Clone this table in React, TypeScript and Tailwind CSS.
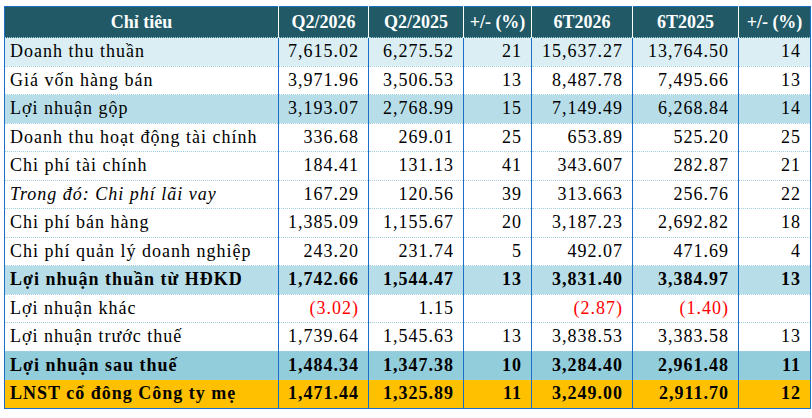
type Row = {
  label: string;
  values: string[];
  bg: string;
  bold?: boolean;
  italic?: boolean;
};

const rows: Row[] = [
  { label: "Doanh thu thuần", values: ["7,615.02", "6,275.52", "21", "15,637.27", "13,764.50", "14"], bg: "bg-[#daeef3]" },
  { label: "Giá vốn hàng bán", values: ["3,971.96", "3,506.53", "13", "8,487.78", "7,495.66", "13"], bg: "bg-white" },
  { label: "Lợi nhuận gộp", values: ["3,193.07", "2,768.99", "15", "7,149.49", "6,268.84", "14"], bg: "bg-[#b7dee8]" },
  { label: "Doanh thu hoạt động tài chính", values: ["336.68", "269.01", "25", "653.89", "525.20", "25"], bg: "bg-white" },
  { label: "Chi phí tài chính", values: ["184.41", "131.13", "41", "343.607", "282.87", "21"], bg: "bg-white" },
  { label: "Trong đó: Chi phí lãi vay", values: ["167.29", "120.56", "39", "313.663", "256.76", "22"], bg: "bg-white", italic: true },
  { label: "Chi phí bán hàng", values: ["1,385.09", "1,155.67", "20", "3,187.23", "2,692.82", "18"], bg: "bg-white" },
  { label: "Chi phí quản lý doanh nghiệp", values: ["243.20", "231.74", "5", "492.07", "471.69", "4"], bg: "bg-white" },
  { label: "Lợi nhuận thuần từ HĐKD", values: ["1,742.66", "1,544.47", "13", "3,831.40", "3,384.97", "13"], bg: "bg-[#b7dee8]", bold: true },
  { label: "Lợi nhuận khác", values: ["(3.02)", "1.15", "", "(2.87)", "(1.40)", ""], bg: "bg-white" },
  { label: "Lợi nhuận trước thuế", values: ["1,739.64", "1,545.63", "13", "3,838.53", "3,383.58", "13"], bg: "bg-white" },
  { label: "Lợi nhuận sau thuế", values: ["1,484.34", "1,347.38", "10", "3,284.40", "2,961.48", "11"], bg: "bg-[#92cddc]", bold: true },
  { label: "LNST cổ đông Công ty mẹ", values: ["1,471.44", "1,325.89", "11", "3,249.00", "2,911.70", "12"], bg: "bg-[#ffc000]", bold: true },
];

const headers = ["Q2/2026", "Q2/2025", "+/- (%)", "6T2026", "6T2025", "+/- (%)"];

export default function App() {
  return (
    <div className="w-[812px] h-[418px] bg-white pt-[6px] pl-[4px] font-['Liberation_Serif',serif] text-[18px] text-black">
      <table className="w-[806px] table-fixed border-collapse border border-[#1b6fc8]">
        <colgroup>
          <col className="w-[274px]" />
          <col className="w-[90px]" />
          <col className="w-[95px]" />
          <col className="w-[68px]" />
          <col className="w-[101px]" />
          <col className="w-[106px]" />
          <col className="w-[72px]" />
        </colgroup>
        <thead>
          <tr className="h-[31px] bg-[#215967] text-white font-bold">
            <th className="text-center font-bold border-r border-white">Chỉ tiêu</th>
            {headers.map((h, i) => (
              <th key={i} className="text-center font-bold border-r border-white last:border-r-0">
                {h}
              </th>
            ))}
          </tr>
        </thead>
        <tbody className="tracking-[1px]">
          {rows.map((r, i) => (
            <tr
              key={i}
              className={`h-[28.5px] ${r.bg} ${r.bold ? "font-bold" : ""} border-t border-dotted border-t-[#9fcfe0]`}
            >
              <td className={`pl-[5px] whitespace-nowrap border-r border-[#1b6fc8] ${r.italic ? "italic" : ""}`}>
                {r.label}
              </td>
              {r.values.map((v, j) => (
                <td
                  key={j}
                  className={`text-right pr-[9px] whitespace-nowrap border-r border-[#1b6fc8] ${
                    v.startsWith("(") ? "text-[#ff0000] font-normal" : ""
                  }`}
                >
                  {v}
                </td>
              ))}
            </tr>
          ))}
        </tbody>
      </table>
    </div>
  );
}
